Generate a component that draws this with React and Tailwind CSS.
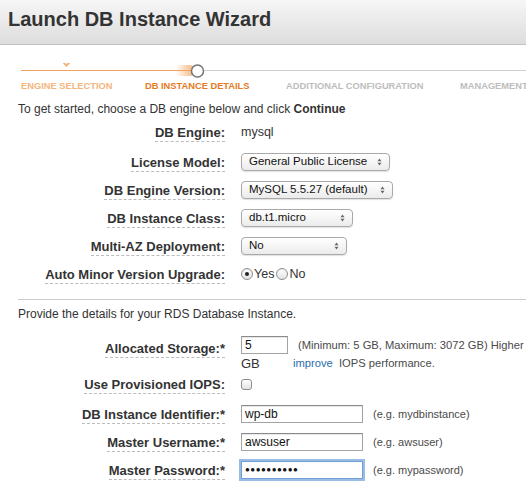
import React from 'react';

const FONT = "font-['Liberation_Sans',Arial,Helvetica,sans-serif]";

// 下拉框上下箭头
const Arrows = () => (
  <svg width="5" height="8" viewBox="0 0 5 8">
    <path d="M0.5 3.2 L2.5 0.6 L4.5 3.2 Z M0.5 4.8 L2.5 7.4 L4.5 4.8 Z" fill="#666" />
  </svg>
);

const Label = ({ children }) => (
  <div className="w-[225px] shrink-0 text-right">
    <span className="inline-block border-b border-dashed border-[#bcbcbc] pb-[1px] text-[13px] font-bold leading-[15px] text-[#333]">
      {children}
    </span>
  </div>
);

const Select = ({ value, width }) => (
  <div
    className={`ml-[16px] flex h-[18px] items-center justify-between rounded-[4px] border border-[#a9a9a9] bg-gradient-to-b from-white to-[#ebebeb] pl-[7px] pr-[7px] text-[11.5px] text-[#111] shadow-[0_1px_1px_rgba(0,0,0,0.12)] ${width}`}
  >
    <span className="whitespace-nowrap">{value}</span>
    <Arrows />
  </div>
);

const Radio = ({ checked }) => (
  <span className="flex h-[12px] w-[12px] items-center justify-center rounded-full border border-[#8e8e8e] bg-gradient-to-b from-white to-[#e4e4e4] shadow-[inset_0_1px_1px_rgba(0,0,0,0.08)]">
    {checked && <span className="h-[4px] w-[4px] rounded-full bg-[#222]" />}
  </span>
);

const TextInput = ({ value, width, focused, password }) => (
  <div
    className={`ml-[16px] flex h-[18px] items-center border bg-white pl-[3px] text-[12px] text-[#111] ${width} ${
      focused
        ? 'border-[#6f9fd6] shadow-[0_0_0_2px_rgba(120,165,220,0.75)]'
        : 'border-[#a4a4a4] border-t-[#8a8a8a] shadow-[inset_0_1px_1px_rgba(0,0,0,0.1)]'
    }`}
  >
    {password ? (
      <span className="text-[8px] tracking-[0.5px]">●●●●●●●●●●</span>
    ) : (
      value
    )}
  </div>
);

const Hint = ({ children }) => (
  <span className="ml-[10px] whitespace-nowrap text-[11px] text-[#4a4a4a]">{children}</span>
);

const Wizard = () => (
  <div className="h-[50px] pt-[18px]">
    <svg width="526" height="16" viewBox="0 63 526 16" className="block">
      <defs>
        <linearGradient id="glow" x1="0" x2="1" y1="0" y2="0">
          <stop offset="0" stopColor="#f4a05a" stopOpacity="0" />
          <stop offset="1" stopColor="#f4a05a" stopOpacity="0.8" />
        </linearGradient>
      </defs>
      <line x1="21" y1="70.5" x2="192" y2="70.5" stroke="#efa25c" strokeWidth="1" />
      <line x1="204" y1="70.5" x2="526" y2="70.5" stroke="#cfcfcf" strokeWidth="1" />
      <rect x="175" y="65" width="20" height="11" rx="5" fill="url(#glow)" />
      <circle cx="197.5" cy="71" r="6" fill="#fff" stroke="#767676" strokeWidth="1.5" />
      <path d="M63.5 62.5 L66.5 65.5 L70 61.8" fill="none" stroke="#f3b47a" strokeWidth="2" />
    </svg>
    <div className="mt-[1px] flex h-[12px] pl-[21px] text-[9.3px] font-bold leading-[12px] whitespace-nowrap">
      <span className="w-[124px] shrink-0 text-[#f3b57e]">ENGINE SELECTION</span>
      <span className="w-[141px] shrink-0 text-[#e67a1e]">DB INSTANCE DETAILS</span>
      <span className="w-[174px] shrink-0 text-[#bdbdbd]">ADDITIONAL CONFIGURATION</span>
      <span className="shrink-0 text-[#bdbdbd]">MANAGEMENT</span>
    </div>
  </div>
);

export default function App() {
  return (
    <div className={`h-[489px] w-[526px] overflow-hidden bg-white text-[#333] ${FONT}`}>
      {/* header */}
      <div className="flex h-[45px] items-center border-b border-[#c2c2c2] bg-gradient-to-b from-[#f6f6f6] to-[#dddddd] pb-[6px] pl-[8px]">
        <h1 className="text-[20px] font-bold leading-none text-[#333]">Launch DB Instance Wizard</h1>
      </div>

      <Wizard />

      <div className="h-[21px] pl-[18px] pt-[7px] text-[12px] leading-[14px] whitespace-nowrap">
        To get started, choose a DB engine below and click <b>Continue</b>
      </div>

      {/* engine section */}
      <div className="flex h-[32px] items-center">
        <Label>DB Engine:</Label>
        <span className="ml-[16px] text-[12.5px]">mysql</span>
      </div>
      <div className="flex h-[28px] items-center">
        <Label>License Model:</Label>
        <Select value="General Public License" width="w-[149px]" />
      </div>
      <div className="flex h-[28px] items-center">
        <Label>DB Engine Version:</Label>
        <Select value="MySQL 5.5.27 (default)" width="w-[152px]" />
      </div>
      <div className="flex h-[28px] items-center">
        <Label>DB Instance Class:</Label>
        <Select value="db.t1.micro" width="w-[112px]" />
      </div>
      <div className="flex h-[28px] items-center">
        <Label>Multi-AZ Deployment:</Label>
        <Select value="No" width="w-[106px]" />
      </div>
      <div className="flex h-[28px] items-center">
        <Label>Auto Minor Version Upgrade:</Label>
        <div className="ml-[16px] flex items-center text-[12.5px]">
          <Radio checked />
          <span className="ml-[1px] mr-[2px]">Yes</span>
          <Radio />
          <span className="ml-[1px]">No</span>
        </div>
      </div>

      <div className="ml-[18px] mt-[11px] border-t border-[#cccccc]" />

      <div className="h-[14px] pl-[18px] mt-[7px] text-[12px] leading-[14px] whitespace-nowrap">
        Provide the details for your RDS Database Instance.
      </div>

      {/* instance section */}
      <div className="mt-[15px] flex items-start">
        <Label>Allocated Storage:*</Label>
        <div className="flex flex-col">
          <TextInput value="5" width="w-[47px]" />
          <span className="ml-[16px] text-[13px] leading-[20px]">GB</span>
        </div>
        <div className="ml-[5px] flex flex-col text-[11.2px] leading-[18px] text-[#4a4a4a] whitespace-nowrap">
          <span className="ml-[5px]">(Minimum: 5 GB, Maximum: 3072 GB) Higher allocated storage may</span>
          <span>
            <span className="text-[#2a6db0]">improve</span>&nbsp; IOPS performance.
          </span>
        </div>
      </div>
      <div className="flex h-[20px] items-center">
        <Label>Use Provisioned IOPS:</Label>
        <span className="ml-[16px] h-[11px] w-[11px] rounded-[3px] border border-[#8c8c8c] bg-gradient-to-b from-white to-[#e2e2e2]" />
      </div>
      <div className="mt-[6px] flex h-[28px] items-center">
        <Label>DB Instance Identifier:*</Label>
        <TextInput value="wp-db" width="w-[122px]" />
        <Hint>(e.g. mydbinstance)</Hint>
      </div>
      <div className="flex h-[28px] items-center">
        <Label>Master Username:*</Label>
        <TextInput value="awsuser" width="w-[122px]" />
        <Hint>(e.g. awsuser)</Hint>
      </div>
      <div className="flex h-[28px] items-center">
        <Label>Master Password:*</Label>
        <TextInput width="w-[122px]" focused password />
        <Hint>(e.g. mypassword)</Hint>
      </div>
    </div>
  );
}
